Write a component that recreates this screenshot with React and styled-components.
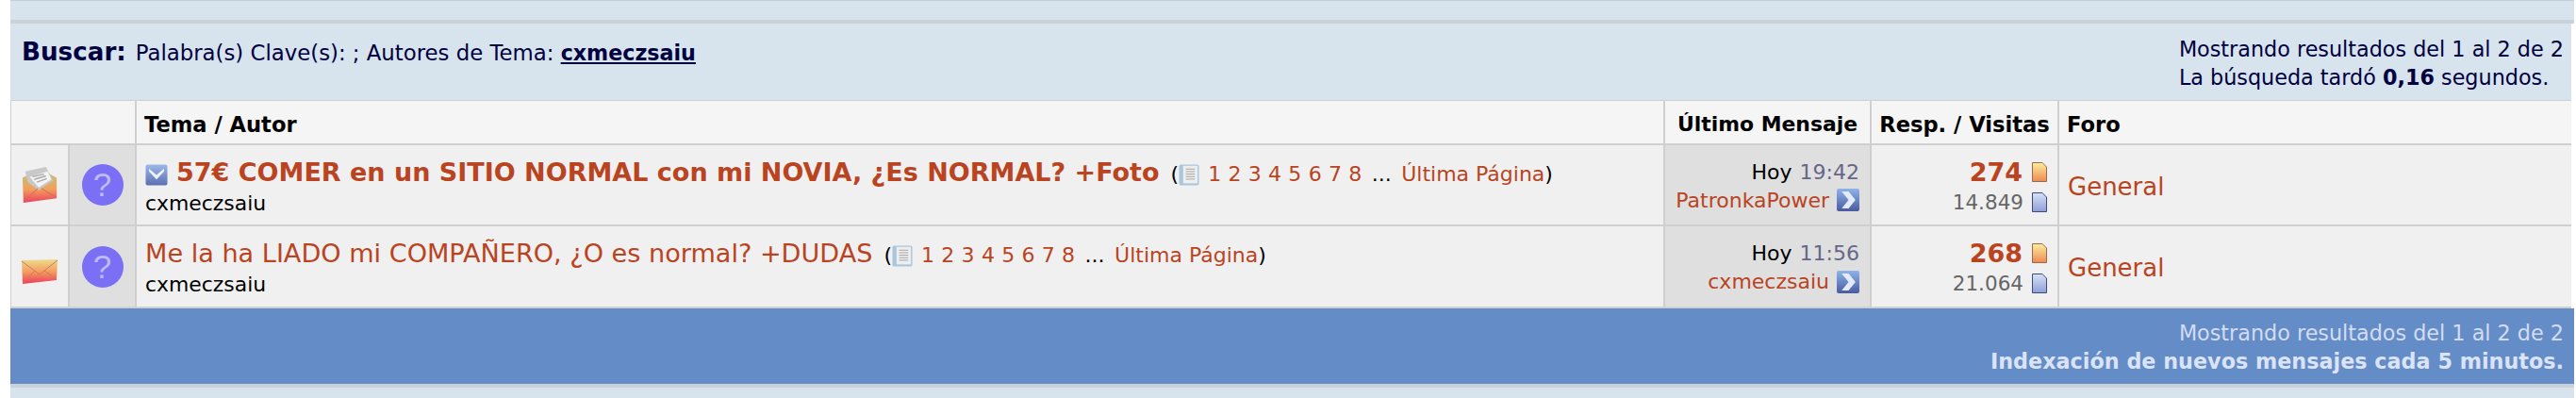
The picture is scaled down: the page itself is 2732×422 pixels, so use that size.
import React from 'react';
import styled, { createGlobalStyle } from 'styled-components';

const colors = {
  panel: '#d7e3ed',
  line: '#cfcfcf',
  navy: '#000040',
  link: '#b9441f',
  blue: '#648cc7',
};

const GlobalStyle = createGlobalStyle`
  html, body {
    margin: 0;
    padding: 0;
    background: #fff;
    font-family: "DejaVu Sans", Verdana, sans-serif;
  }
`;

const Page = styled.div`
  width: 2732px;
  height: 422px;
  padding: 0 2px 0 11px;
  box-sizing: border-box;
  overflow: hidden;
`;
const Strip = styled.div`
  height: ${p => p.$h}px;
  background: ${colors.panel};
  border-top: ${p => (p.$top ? '1px solid #c4ced8' : 'none')};
  border-bottom: ${p => (p.$bottom ? '4px solid #cbd1d9' : 'none')};
  box-sizing: border-box;
`;
const SearchPanel = styled.div`
  height: 81px;
  margin-right: 3px;
  padding: 12px 8px 0 12px;
  box-sizing: border-box;
  display: flex;
  justify-content: space-between;
  background: ${colors.panel};
  color: ${colors.navy};
  font-size: 22.8px;
`;
const SearchTitle = styled.div`
  line-height: 36px;
  b {
    font-size: 26.2px;
    margin-right: 10px;
  }
  a {
    font-size: 22.2px;
    font-weight: bold;
    text-decoration: underline;
    color: ${colors.navy};
  }
`;
const Stats = styled.div`
  font-size: 22.3px;
  line-height: 30px;
  white-space: nowrap;
`;
const Table = styled.div`
  margin-right: 3px;
  border-top: 1px solid ${colors.line};
`;
const Row = styled.div`
  display: grid;
  grid-template-columns: 61px 71px 1621px 219px 199px 1fr;
  height: ${p => p.$h}px;
  background: ${p => (p.$head ? '#f5f5f5' : '#f0f0f0')};
  border-bottom: 2px solid ${colors.line};
  box-sizing: border-box;
  box-shadow: inset 1px 0 0 ${colors.line};
`;
const HeadCell = styled.div`
  border-left: ${p => (p.$noLine ? '0' : `2px solid ${colors.line}`)};
  padding: 0 8px;
  font-size: ${p => p.$size || 22.6}px;
  font-weight: bold;
  color: #000;
  line-height: 50px;
  text-align: ${p => p.$align || 'left'};
  white-space: nowrap;
`;
const Cell = styled.div`
  display: flex;
  flex-direction: column;
  justify-content: center;
  border-left: 2px solid ${colors.line};
  padding: ${p => p.$pad || '0 9px'};
  background: ${p => (p.$alt ? '#dfdfdf' : 'transparent')};
  align-items: ${p => p.$items || 'stretch'};
  min-width: 0;
  white-space: nowrap;
`;
const IconCell = styled(Cell)`
  border-left: 0;
  align-items: center;
  padding: ${p => (p.$low ? '11px' : '0')} 0 0;
`;
const ThreadCell = styled(Cell)`
  padding-top: 3px;
`;
const TitleLine = styled.div`
  height: 36px;
  line-height: 36px;
  color: #000;
  font-size: 22px;
`;
const TitleLink = styled.a`
  color: ${colors.link};
  font-size: ${p => (p.$bold ? 27 : 27.1)}px;
  font-weight: ${p => (p.$bold ? 'bold' : 'normal')};
  margin-right: 12px;
`;
const PageLink = styled.a`
  color: ${colors.link};
  margin-left: ${p => p.$gap || 0}px;
`;
const Dots = styled.span`
  margin: 0 10.5px;
`;
const Author = styled.div`
  color: #000;
  font-size: 21.9px;
  line-height: 30px;
`;
const RightLine = styled.div`
  display: flex;
  justify-content: flex-end;
  align-items: center;
  height: ${p => p.$h || 30}px;
  font-size: 22px;
  color: #000;
`;
const Time = styled.span`
  color: #666688;
  margin-left: 8px;
`;
const UserLink = styled.a`
  color: ${colors.link};
  margin-right: 8px;
`;
const Replies = styled.a`
  color: ${colors.link};
  font-size: 27px;
  font-weight: bold;
  margin-right: 10px;
`;
const Views = styled.span`
  color: #666;
  margin-right: 9px;
  font-size: 21.5px;
`;
const ForumLink = styled.a`
  color: ${colors.link};
  font-size: 26px;
  margin-top: 3px;
`;
const QuestionBadge = styled.div`
  width: 44px;
  height: 44px;
  border-radius: 50%;
  background: #7a6ff5;
  color: #bcbcf6;
  font-family: "Liberation Sans", Arial, sans-serif;
  font-size: 35px;
  line-height: 44px;
  text-align: center;
`;
const Footer = styled.div`
  height: 80px;
  padding: 11px 11px 0 0;
  box-sizing: border-box;
  background: ${colors.blue};
  color: #d3dcf2;
  font-size: 22.3px;
  line-height: 30px;
  text-align: right;
  b {
    color: #dbe3f7;
  }
`;
const BottomRule = styled.div`
  height: 4px;
  background: #cbd1d9;
`;
const InlineIcon = styled.svg`
  vertical-align: -5px;
  margin-right: ${p => p.$right || 0}px;
`;

const OpenEnvelope = () => (
  <svg width="40" height="40" viewBox="0 0 40 42">
    <defs>
      <linearGradient id="env1" x1="0" y1="0" x2="0" y2="1">
        <stop offset="0.2" stopColor="#c9bd7c" />
        <stop offset="0.6" stopColor="#f0a05c" />
        <stop offset="1" stopColor="#ee3f5e" />
      </linearGradient>
    </defs>
    <path d="M1 13 L20 3 L39 13 L39 36 L2 41 Z" fill="url(#env1)" />
    <path d="M4 6 L27 1 L35 16 L19 27 L7 18 Z" fill="#c8c8c8" />
    <path d="M9 12 L29 6 L33 15 L19 24 Z" fill="#f4f4f4" />
    <path d="M12 12 L25 9 M14 15 L27 11 M17 18 L28 14" stroke="#a8a8a8" strokeWidth="1.5" />
    <path d="M2 40 L18 25 M38 35 L22 25" stroke="#c96a58" strokeWidth="1" fill="none" />
  </svg>
);

const ClosedEnvelope = () => (
  <svg width="40" height="28" viewBox="0 0 40 28">
    <defs>
      <linearGradient id="env2" x1="0" y1="0" x2="0" y2="1">
        <stop offset="0" stopColor="#ecdc8c" />
        <stop offset="0.5" stopColor="#f49e60" />
        <stop offset="1" stopColor="#ee3a5c" />
      </linearGradient>
    </defs>
    <path d="M1 2 L39 1 L38 23 L2 27 Z" fill="url(#env2)" />
    <path d="M1 3 L20 17 L39 2 M2 26 L15 13 M38 22 L25 13" stroke="#cf7a5c" strokeWidth="1" fill="none" />
  </svg>
);

const CheckIcon = () => (
  <InlineIcon $right={9} width="24" height="23" viewBox="0 0 24 24" preserveAspectRatio="none">
    <defs>
      <linearGradient id="chk" x1="0" y1="0" x2="0" y2="1">
        <stop offset="0" stopColor="#9db9ea" />
        <stop offset="1" stopColor="#5a6fb0" />
      </linearGradient>
    </defs>
    <rect x="0.5" y="0.5" width="23" height="23" rx="2" fill="url(#chk)" />
    <path d="M4 8 L12 17 L20 8 L20 5 L12 12 L4 5 Z" fill="#eef2fb" />
  </InlineIcon>
);

const PagesIcon = () => (
  <InlineIcon width="22" height="23" viewBox="0 0 23 26" preserveAspectRatio="none">
    <rect x="0.5" y="0.5" width="22" height="25" rx="2" fill="#a9c6dc" />
    <rect x="5" y="2" width="16" height="21" fill="#eeeeee" />
    <path d="M8 6 H18 M8 9 H18 M8 12 H18 M8 15 H18 M8 18 H18" stroke="#a0a0a0" strokeWidth="1" />
  </InlineIcon>
);

const GoIcon = () => (
  <svg width="24" height="24" viewBox="0 0 23 25" preserveAspectRatio="none">
    <defs>
      <linearGradient id="go" x1="0" y1="0" x2="0" y2="1">
        <stop offset="0" stopColor="#8fb4e8" />
        <stop offset="1" stopColor="#4a5aa0" />
      </linearGradient>
    </defs>
    <rect width="23" height="25" rx="2" fill="url(#go)" />
    <path d="M5 3 H12 L19 12.5 L12 22 H5 L12 12.5 Z" fill="#e4ebf8" />
  </svg>
);

const DocIcon = ({ id, from, to, edge }) => (
  <svg width="16" height="21" viewBox="0 0 16 21">
    <defs>
      <linearGradient id={id} x1="0" y1="0" x2="0" y2="1">
        <stop offset="0" stopColor={from} />
        <stop offset="1" stopColor={to} />
      </linearGradient>
    </defs>
    <path d="M0.5 0.5 H11 L15.5 5 V20.5 H0.5 Z" fill={`url(#${id})`} stroke={edge} />
  </svg>
);

const PageLinks = () => (
  <>
    (<PagesIcon />
    {[1, 2, 3, 4, 5, 6, 7, 8].map(n => (
      <PageLink key={n} $gap={n === 1 ? 9 : 7.3}>{n}</PageLink>
    ))}
    <Dots>...</Dots>
    <PageLink>Última Página</PageLink>)
  </>
);

const threads = [
  {
    title: '57€ COMER en un SITIO NORMAL con mi NOVIA, ¿Es NORMAL? +Foto',
    bold: true,
    opened: true,
    time: '19:42',
    lastUser: 'PatronkaPower',
    replies: 274,
    views: '14.849',
    h: 86,
  },
  {
    title: 'Me la ha LIADO mi COMPAÑERO, ¿O es normal? +DUDAS',
    bold: false,
    opened: false,
    time: '11:56',
    lastUser: 'cxmeczsaiu',
    replies: 268,
    views: '21.064',
    h: 87,
  },
];

export default function App() {
  return (
    <Page>
      <GlobalStyle />
      <Strip $h={25} $top $bottom />
      <SearchPanel>
        <SearchTitle>
          <b>Buscar:</b>Palabra(s) Clave(s): ; Autores de Tema: <a>cxmeczsaiu</a>
        </SearchTitle>
        <Stats>
          Mostrando resultados del 1 al 2 de 2
          <br />
          La búsqueda tardó <b>0,16</b> segundos.
        </Stats>
      </SearchPanel>
      <Table>
        <Row $head $h={47}>
          <HeadCell $noLine />
          <HeadCell $noLine />
          <HeadCell>Tema / Autor</HeadCell>
          <HeadCell $align="center" $size={21.9}>Último Mensaje</HeadCell>
          <HeadCell $align="center">Resp. / Visitas</HeadCell>
          <HeadCell>Foro</HeadCell>
        </Row>
        {threads.map((t, i) => (
          <Row key={t.lastUser} $h={t.h}>
            <IconCell $low={!t.opened}>{t.opened ? <OpenEnvelope /> : <ClosedEnvelope />}</IconCell>
            <Cell $alt $items="center" $pad="0">
              <QuestionBadge>?</QuestionBadge>
            </Cell>
            <ThreadCell>
              <TitleLine>
                {t.bold && <CheckIcon />}
                <TitleLink $bold={t.bold}>{t.title}</TitleLink>
                <PageLinks />
              </TitleLine>
              <Author>cxmeczsaiu</Author>
            </ThreadCell>
            <Cell $alt $pad="2px 11px 0 9px">
              <RightLine>
                Hoy<Time>{t.time}</Time>
              </RightLine>
              <RightLine>
                <UserLink>{t.lastUser}</UserLink>
                <GoIcon />
              </RightLine>
            </Cell>
            <Cell $pad="4px 11px 0 9px">
              <RightLine $h={32}>
                <Replies>{t.replies}</Replies>
                <DocIcon id={`rep${i}`} from="#fbeea0" to="#ee8a52" edge="#9a6a4a" />
              </RightLine>
              <RightLine $h={32}>
                <Views>{t.views}</Views>
                <DocIcon id={`vis${i}`} from="#d6e2f6" to="#8f9fd6" edge="#3c4a80" />
              </RightLine>
            </Cell>
            <Cell>
              <ForumLink>General</ForumLink>
            </Cell>
          </Row>
        ))}
      </Table>
      <Footer>
        Mostrando resultados del 1 al 2 de 2
        <br />
        <b>Indexación de nuevos mensajes cada 5 minutos.</b>
      </Footer>
      <BottomRule />
      <Strip $h={11} />
    </Page>
  );
}
